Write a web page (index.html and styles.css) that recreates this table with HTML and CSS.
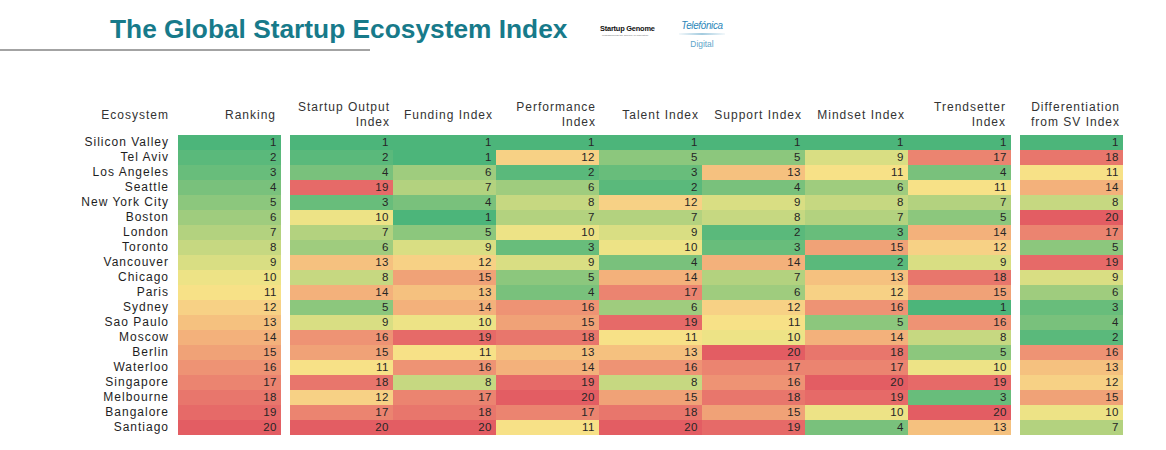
FILE: index.html
```html
<!DOCTYPE html>
<html lang="en">
<head>
<meta charset="utf-8">
<title>The Global Startup Ecosystem Index</title>
<link rel="stylesheet" href="styles.css">
</head>
<body>
<header class="top">
  <div class="title-wrap">
    <h1 class="title">The Global Startup Ecosystem Index</h1>
    <div class="rule"></div>
  </div>
  <div class="logos">
    <div class="sg">
      <div class="sg-name">Startup Genome</div>
      <div class="sg-tag">crowdsourcing the science of innovation</div>
    </div>
    <div class="tf">
      <div class="tf-name">Telefónica</div>
      <div class="tf-line"></div>
      <div class="tf-sub">Digital</div>
    </div>
  </div>
</header>

<main class="board">
  <div class="hd lab">Ecosystem</div>
  <div class="hd sep">Ranking</div>
  <div class="hd">Startup Output<br>Index</div>
  <div class="hd">Funding Index</div>
  <div class="hd">Performance<br>Index</div>
  <div class="hd">Talent Index</div>
  <div class="hd">Support Index</div>
  <div class="hd">Mindset Index</div>
  <div class="hd sep">Trendsetter<br>Index</div>
  <div class="hd">Differentiation<br>from SV Index</div>

  <div class="name">Silicon Valley</div><div class="c sep v1">1</div><div class="c v1">1</div><div class="c v1">1</div><div class="c v1">1</div><div class="c v1">1</div><div class="c v1">1</div><div class="c v1">1</div><div class="c sep v1">1</div><div class="c v1">1</div>
  <div class="name">Tel Aviv</div><div class="c sep v2">2</div><div class="c v2">2</div><div class="c v1">1</div><div class="c v12">12</div><div class="c v5">5</div><div class="c v5">5</div><div class="c v9">9</div><div class="c sep v17">17</div><div class="c v18">18</div>
  <div class="name">Los Angeles</div><div class="c sep v3">3</div><div class="c v4">4</div><div class="c v6">6</div><div class="c v2">2</div><div class="c v3">3</div><div class="c v13">13</div><div class="c v11">11</div><div class="c sep v4">4</div><div class="c v11">11</div>
  <div class="name">Seattle</div><div class="c sep v4">4</div><div class="c v19">19</div><div class="c v7">7</div><div class="c v6">6</div><div class="c v2">2</div><div class="c v4">4</div><div class="c v6">6</div><div class="c sep v11">11</div><div class="c v14">14</div>
  <div class="name">New York City</div><div class="c sep v5">5</div><div class="c v3">3</div><div class="c v4">4</div><div class="c v8">8</div><div class="c v12">12</div><div class="c v9">9</div><div class="c v8">8</div><div class="c sep v7">7</div><div class="c v8">8</div>
  <div class="name">Boston</div><div class="c sep v6">6</div><div class="c v10">10</div><div class="c v1">1</div><div class="c v7">7</div><div class="c v7">7</div><div class="c v8">8</div><div class="c v7">7</div><div class="c sep v5">5</div><div class="c v20">20</div>
  <div class="name">London</div><div class="c sep v7">7</div><div class="c v7">7</div><div class="c v5">5</div><div class="c v10">10</div><div class="c v9">9</div><div class="c v2">2</div><div class="c v3">3</div><div class="c sep v14">14</div><div class="c v17">17</div>
  <div class="name">Toronto</div><div class="c sep v8">8</div><div class="c v6">6</div><div class="c v9">9</div><div class="c v3">3</div><div class="c v10">10</div><div class="c v3">3</div><div class="c v15">15</div><div class="c sep v12">12</div><div class="c v5">5</div>
  <div class="name">Vancouver</div><div class="c sep v9">9</div><div class="c v13">13</div><div class="c v12">12</div><div class="c v9">9</div><div class="c v4">4</div><div class="c v14">14</div><div class="c v2">2</div><div class="c sep v9">9</div><div class="c v19">19</div>
  <div class="name">Chicago</div><div class="c sep v10">10</div><div class="c v8">8</div><div class="c v15">15</div><div class="c v5">5</div><div class="c v14">14</div><div class="c v7">7</div><div class="c v13">13</div><div class="c sep v18">18</div><div class="c v9">9</div>
  <div class="name">Paris</div><div class="c sep v11">11</div><div class="c v14">14</div><div class="c v13">13</div><div class="c v4">4</div><div class="c v17">17</div><div class="c v6">6</div><div class="c v12">12</div><div class="c sep v15">15</div><div class="c v6">6</div>
  <div class="name">Sydney</div><div class="c sep v12">12</div><div class="c v5">5</div><div class="c v14">14</div><div class="c v16">16</div><div class="c v6">6</div><div class="c v12">12</div><div class="c v16">16</div><div class="c sep v1">1</div><div class="c v3">3</div>
  <div class="name">Sao Paulo</div><div class="c sep v13">13</div><div class="c v9">9</div><div class="c v10">10</div><div class="c v15">15</div><div class="c v19">19</div><div class="c v11">11</div><div class="c v5">5</div><div class="c sep v16">16</div><div class="c v4">4</div>
  <div class="name">Moscow</div><div class="c sep v14">14</div><div class="c v16">16</div><div class="c v19">19</div><div class="c v18">18</div><div class="c v11">11</div><div class="c v10">10</div><div class="c v14">14</div><div class="c sep v8">8</div><div class="c v2">2</div>
  <div class="name">Berlin</div><div class="c sep v15">15</div><div class="c v15">15</div><div class="c v11">11</div><div class="c v13">13</div><div class="c v13">13</div><div class="c v20">20</div><div class="c v18">18</div><div class="c sep v5">5</div><div class="c v16">16</div>
  <div class="name">Waterloo</div><div class="c sep v16">16</div><div class="c v11">11</div><div class="c v16">16</div><div class="c v14">14</div><div class="c v16">16</div><div class="c v17">17</div><div class="c v17">17</div><div class="c sep v10">10</div><div class="c v13">13</div>
  <div class="name">Singapore</div><div class="c sep v17">17</div><div class="c v18">18</div><div class="c v8">8</div><div class="c v19">19</div><div class="c v8">8</div><div class="c v16">16</div><div class="c v20">20</div><div class="c sep v19">19</div><div class="c v12">12</div>
  <div class="name">Melbourne</div><div class="c sep v18">18</div><div class="c v12">12</div><div class="c v17">17</div><div class="c v20">20</div><div class="c v15">15</div><div class="c v18">18</div><div class="c v19">19</div><div class="c sep v3">3</div><div class="c v15">15</div>
  <div class="name">Bangalore</div><div class="c sep v19">19</div><div class="c v17">17</div><div class="c v18">18</div><div class="c v17">17</div><div class="c v18">18</div><div class="c v15">15</div><div class="c v10">10</div><div class="c sep v20">20</div><div class="c v10">10</div>
  <div class="name">Santiago</div><div class="c sep v20">20</div><div class="c v20">20</div><div class="c v20">20</div><div class="c v11">11</div><div class="c v20">20</div><div class="c v19">19</div><div class="c v4">4</div><div class="c sep v13">13</div><div class="c v7">7</div>
</main>
</body>
</html>
```
FILE: styles.css
```css
html, body {
  margin: 0;
  padding: 0;
  background: #ffffff;
}

body {
  font-family: "Liberation Sans", Arial, sans-serif;
  color: #222;
}

/* ---------- top heading ---------- */
.top {
  display: flex;
  align-items: flex-start;
  height: 100px;
}

.title-wrap {
  width: 600px;
  flex: none;
}

.title {
  margin: 14px 0 0 110px;
  font-size: 26.3px;
  line-height: 30px;
  font-weight: bold;
  color: #177a8a;
  white-space: nowrap;
}

.rule {
  width: 370px;
  height: 2px;
  margin-top: 5px;
  background: #a3a3a3;
}

.logos {
  display: flex;
  align-items: flex-start;
}

.sg {
  margin-top: 24px;
  width: 56px;
}

.sg-name {
  font-size: 7.4px;
  line-height: 10px;
  font-weight: bold;
  color: #111;
  letter-spacing: -0.2px;
  white-space: nowrap;
}

.sg-tag {
  margin-top: 0;
  padding-left: 2px;
  font-size: 2.5px;
  line-height: 3px;
  color: #666;
  white-space: nowrap;
  letter-spacing: 0.05px;
}

.tf {
  margin-left: 23px;
  margin-top: 19px;
  width: 46px;
  display: flex;
  flex-direction: column;
  align-items: center;
}

.tf-name {
  font-size: 11.5px;
  line-height: 13px;
  font-style: italic;
  color: #2b86b9;
  letter-spacing: -0.4px;
  white-space: nowrap;
  transform: scaleX(0.86);
}

.tf-line {
  width: 46px;
  height: 2px;
  margin-top: 1px;
  background: linear-gradient(90deg, rgba(140, 190, 215, 0.1), rgba(140, 190, 215, 0.8) 50%, rgba(140, 190, 215, 0.1));
}

.tf-sub {
  margin-top: 5px;
  font-size: 8.4px;
  line-height: 9px;
  color: #5ba4c9;
}

/* ---------- board ---------- */
.board {
  display: grid;
  grid-template-columns: 108px 112px repeat(6, 103px) 112px 103px;
  margin-left: 70px;
  width: max-content;
}

.hd {
  height: 30px;
  padding: 0 3px 5px 0;
  display: flex;
  align-items: center;
  justify-content: flex-end;
  text-align: right;
  font-size: 12px;
  line-height: 15px;
  letter-spacing: 1px;
  color: #333;
}

.hd.lab {
  padding-right: 9px;
}

.name {
  height: 15px;
  line-height: 15px;
  padding-right: 9px;
  text-align: right;
  font-size: 12px;
  letter-spacing: 1px;
  color: #1e1e1e;
  white-space: nowrap;
}

.c {
  height: 15px;
  line-height: 15px;
  padding-right: 4px;
  text-align: right;
  font-size: 11.5px;
  letter-spacing: 0.5px;
  color: #262626;
}

.sep {
  margin-right: 9px;
}

.hd.sep {
  margin-right: 9px;
  padding-right: 5px;
}

/* colour scale: 1 = green, 10/11 = yellow, 20 = red */
.v1  { background: #4cb57a; }
.v2  { background: #5ab97b; }
.v3  { background: #68bd7b; }
.v4  { background: #79c17c; }
.v5  { background: #8cc77d; }
.v6  { background: #9fcc7e; }
.v7  { background: #b3d27f; }
.v8  { background: #c6d881; }
.v9  { background: #d9de83; }
.v10 { background: #ede386; }
.v11 { background: #f7e187; }
.v12 { background: #f7d185; }
.v13 { background: #f5c17f; }
.v14 { background: #f3b17b; }
.v15 { background: #f0a277; }
.v16 { background: #ee9374; }
.v17 { background: #eb8470; }
.v18 { background: #e8766c; }
.v19 { background: #e66a68; }
.v20 { background: #e35d63; }
```
